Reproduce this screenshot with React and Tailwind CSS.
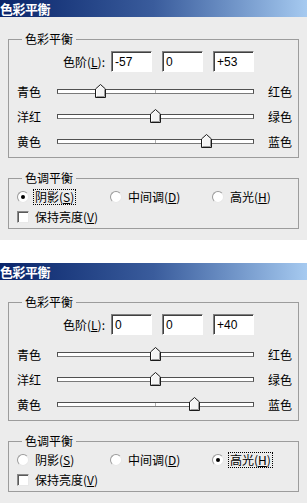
import React from 'react';

function Mn({ children }) {
  // mnemonic letter in parentheses, underlined
  return (
    <>
      (<span className="underline underline-offset-[1px]">{children}</span>)
    </>
  );
}

function Slider({ left, right, value }) {
  // value -100..100, track starts at x=57 and is 197px wide
  const center = 98.5 + value * 0.97;
  return (
    <div className="flex items-center h-[25px] pl-[8px]">
      <span className="w-[40px] leading-[14px]">{left}</span>
      <div className="relative w-[197px] h-[5px] bg-white border border-[#505050] border-b-[#7a7a7a]">
        <span className="absolute left-[97px] top-0 w-px h-full bg-[#b0b0b0]" />
        <svg
          className="absolute top-[-6px]"
          style={{ left: center - 6.5 }}
          width="11"
          height="14"
          viewBox="0 0 11 14"
        >
          <path d="M0.5 13.5 V5 L5.5 0.5 L10.5 5 V13.5 Z" fill="#f4f4f4" stroke="#1a1a1a" />
          <path d="M1.5 12.5 V5.4 L5.5 1.8" fill="none" stroke="#ffffff" />
          <path d="M9.5 5.4 V12.5 H1.5" fill="none" stroke="#9a9a9a" />
        </svg>
      </div>
      <span className="ml-[14px] leading-[14px]">{right}</span>
    </div>
  );
}

function Field({ value }) {
  return (
    <div className="w-[41px] h-[21px] bg-white border border-[#808080] border-b-white border-r-white shadow-[inset_1px_1px_0_#404040] pl-[3px] pt-[2px] text-[12px] leading-[16px] font-['Liberation_Sans',Arial,sans-serif]">
      {value}
    </div>
  );
}

function Radio({ checked, focused, children }) {
  return (
    <div className="flex items-center gap-[5px]">
      <span className="relative w-[12px] h-[12px] rounded-full bg-white border border-[#9a9a9a] border-b-[#e8e8e8] border-r-[#e8e8e8] flex items-center justify-center">
        {checked && <span className="w-[4px] h-[4px] rounded-full bg-black" />}
      </span>
      <span className={focused ? 'outline-1 outline-dotted outline-black px-px leading-[14px]' : 'px-px leading-[14px]'}>
        {children}
      </span>
    </div>
  );
}

function Panel({ levels, sliders, tone }) {
  return (
    <div className="h-[240px] bg-[#ececec] flex flex-col text-[12px] text-black">
      <div className="h-[17px] bg-gradient-to-r from-[#0a246a] via-[#3a5c9c] to-[#a6caf0] text-white font-bold text-[13px] leading-[17px] tracking-[-0.5px]">
        色彩平衡
      </div>

      <fieldset className="mx-[8px] mt-[15px] border border-[#9c9c9c] pb-[3px]">
        <legend className="ml-[13px] px-[3px] leading-[14px]">色彩平衡</legend>
        <div className="flex items-center mt-[5px] pl-[8px]">
          <span className="w-[88px] text-right leading-[14px]">
            色阶<Mn>L</Mn>:
          </span>
          <div className="flex gap-[10px] ml-[6px]">
            {levels.map((v, i) => (
              <Field key={i} value={v} />
            ))}
          </div>
        </div>
        <div className="mt-[7px]">
          <Slider left="青色" right="红色" value={sliders[0]} />
          <Slider left="洋红" right="绿色" value={sliders[1]} />
          <Slider left="黄色" right="蓝色" value={sliders[2]} />
        </div>
      </fieldset>

      <fieldset className="mx-[8px] mt-[13px] border border-[#9c9c9c] pb-[3px]">
        <legend className="ml-[13px] px-[3px] leading-[14px]">色调平衡</legend>
        <div className="flex items-center h-[16px] mt-[4px] pl-[8px]">
          <div className="w-[93px]">
            <Radio checked={tone === 0} focused={tone === 0}>
              阴影<Mn>S</Mn>
            </Radio>
          </div>
          <div className="w-[102px]">
            <Radio checked={tone === 1} focused={tone === 1}>
              中间调<Mn>D</Mn>
            </Radio>
          </div>
          <Radio checked={tone === 2} focused={tone === 2}>
            高光<Mn>H</Mn>
          </Radio>
        </div>
        <div className="flex items-center gap-[5px] h-[16px] mt-[4px] pl-[8px]">
          <span className="w-[12px] h-[12px] bg-white border border-[#8a8a8a] border-b-[#e8e8e8] border-r-[#e8e8e8] shadow-[inset_1px_1px_0_#5a5a5a]" />
          <span className="leading-[14px] px-px">
            保持亮度<Mn>V</Mn>
          </span>
        </div>
      </fieldset>
    </div>
  );
}

export default function App() {
  return (
    <div className="w-[307px] h-[504px] overflow-hidden bg-white font-['Noto_Sans_CJK_SC',sans-serif]">
      <Panel levels={['-57', '0', '+53']} sliders={[-57, 0, 53]} tone={0} />
      <div className="h-[23px] bg-white" />
      <Panel levels={['0', '0', '+40']} sliders={[0, 0, 40]} tone={2} />
    </div>
  );
}
